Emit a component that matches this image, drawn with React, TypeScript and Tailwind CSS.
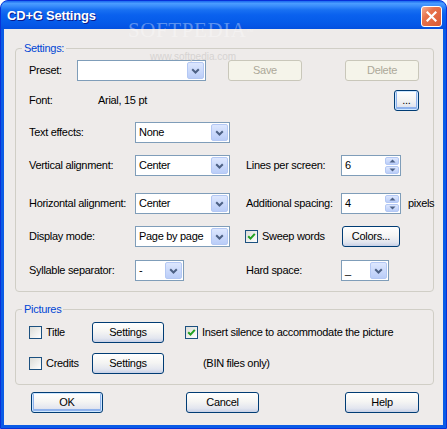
import React from 'react'

function Chevron() {
  return (
    <svg width="9" height="6" viewBox="0 0 9 6">
      <path d="M1.2 1.2 L4.5 4.5 L7.8 1.2" stroke="#4D6185" strokeWidth="2" fill="none" />
    </svg>
  )
}

function Combo({ value, w }: { value: string; w: string }) {
  return (
    <div className={`${w} h-[21px] shrink-0 flex border border-[#7F9DB9] bg-white`}>
      <div className="flex-1 pl-[3px] flex items-center overflow-hidden whitespace-nowrap">{value}</div>
      <div className="w-[17px] m-px flex items-center justify-center rounded-[2px] border border-[#B4C8F4] bg-[linear-gradient(180deg,#DDE7FE,#BACDF8)]">
        <Chevron />
      </div>
    </div>
  )
}

function SpinArrow({ up }: { up?: boolean }) {
  return (
    <svg width="7" height="4" viewBox="0 0 7 4">
      <path d={up ? 'M0.5 3.5 L3.5 0.5 L6.5 3.5 Z' : 'M0.5 0.5 L3.5 3.5 L6.5 0.5 Z'} fill="#4D6185" />
    </svg>
  )
}

function Spin({ value }: { value: string }) {
  return (
    <div className="w-[60px] h-[21px] shrink-0 flex border border-[#7F9DB9] bg-white">
      <div className="flex-1 pl-[3px] flex items-center">{value}</div>
      <div className="w-[16px] flex flex-col gap-px p-px">
        <div className="flex-1 flex items-center justify-center rounded-[2px] border border-[#B4C8F4] bg-[linear-gradient(180deg,#DDE7FE,#BACDF8)]">
          <SpinArrow up />
        </div>
        <div className="flex-1 flex items-center justify-center rounded-[2px] border border-[#B4C8F4] bg-[linear-gradient(180deg,#DDE7FE,#BACDF8)]">
          <SpinArrow />
        </div>
      </div>
    </div>
  )
}

function Check({ checked }: { checked?: boolean }) {
  return (
    <div className="w-[13px] h-[13px] shrink-0 border border-[#1C5180] bg-[linear-gradient(135deg,#DCDCD7,#FFFFFF)] flex items-center justify-center">
      {checked && (
        <svg width="9" height="9" viewBox="0 0 9 9">
          <path d="M1.2 4.2 L3.5 6.6 L7.8 1.8" stroke="#21A121" strokeWidth="2" fill="none" />
        </svg>
      )}
    </div>
  )
}

function Btn({ children, w, def, disabled, cls = '' }: { children: React.ReactNode; w: string; def?: boolean; disabled?: boolean; cls?: string }) {
  if (disabled) {
    return (
      <div className={`${w} ${cls} h-[21px] shrink-0 flex items-center justify-center rounded-[3px] border border-[#C9C7BA] bg-[#F5F4EA] text-[#ACA899]`}>
        {children}
      </div>
    )
  }
  return (
    <div
      className={`${w} ${cls} h-[21px] shrink-0 flex items-center justify-center rounded-[3px] border border-[#003C74] bg-[linear-gradient(180deg,#FFFFFF_0%,#F5F5F3_45%,#E3E6EF_80%,#C7D0E6_100%)] ${
        def ? 'shadow-[inset_0_0_0_1px_#CEE7FF,inset_0_-1px_0_2px_#8FB2EC]' : ''
      }`}
    >
      {children}
    </div>
  )
}

function Group({ label, children, cls = '' }: { label: string; children: React.ReactNode; cls?: string }) {
  return (
    <div className={`relative w-[419px] border border-[#D0CEC6] rounded-[4px] ${cls}`}>
      <span className="absolute left-[6px] top-[-8px] px-[2px] leading-[14px] bg-[#EEEBEA] text-[#0046D5]">{label}</span>
      {children}
    </div>
  )
}

const row = 'h-[21px] flex items-center whitespace-nowrap [&>*]:shrink-0'

export default function App() {
  return (
    <div className="w-[447px] h-[429px] flex flex-col rounded-t-[8px] overflow-hidden bg-[#0A5BE6] border border-[#0831D9] relative font-['Liberation_Sans',Arial,sans-serif] text-[11px] tracking-[-0.3px] text-black">
      <div className="h-[28px] shrink-0 flex items-center justify-between bg-[linear-gradient(180deg,#1A6AF0_0%,#4A9CFF_9%,#3A8DFB_18%,#1870F2_32%,#0A61EE_50%,#065CEA_72%,#0556E6_88%,#0350DE_100%)]">
        <span className="ml-[6px] mt-[1px] text-white font-bold text-[13px] tracking-[-0.2px] [text-shadow:1px_1px_0_#0A1A8A]">CD+G Settings</span>
        <div className="mr-[4px] mt-[2px] w-[21px] h-[21px] rounded-[3px] border border-white bg-[linear-gradient(135deg,#F4B095_0%,#E8734C_35%,#DA5A35_100%)] flex items-center justify-center">
          <svg width="11" height="11" viewBox="0 0 11 11">
            <path d="M1.5 1.5 L9.5 9.5 M9.5 1.5 L1.5 9.5" stroke="white" strokeWidth="2.2" strokeLinecap="square" />
          </svg>
        </div>
      </div>
      <div className="flex-1 flex px-[3px] pb-[3px]">
        <div className="flex-1 bg-[#EEEBEA] flex flex-col pl-[11px]">
          <Group label="Settings:" cls="mt-[19px]">
            <div className="pl-[13px] pr-[14px] pt-[11px] pb-[10px]">
              <div className={row}>
                <span className="w-[48px]">Preset:</span>
                <Combo value="" w="w-[129px]" />
                <Btn w="w-[74px]" disabled cls="ml-[22px]">Save</Btn>
                <Btn w="w-[74px]" disabled cls="ml-auto">Delete</Btn>
              </div>
              <div className={`${row} mt-[9px]`}>
                <span className="w-[69px]">Font:</span>
                <span>Arial, 15 pt</span>
                <Btn w="w-[25px]" def cls="ml-auto">...</Btn>
              </div>
              <div className={`${row} mt-[11px]`}>
                <span className="w-[106px]">Text effects:</span>
                <Combo value="None" w="w-[95px]" />
              </div>
              <div className={`${row} mt-[12px]`}>
                <span className="w-[106px]">Vertical alignment:</span>
                <Combo value="Center" w="w-[95px]" />
                <span className="ml-[16px] w-[95px]">Lines per screen:</span>
                <Spin value="6" />
              </div>
              <div className={`${row} mt-[17px]`}>
                <span className="w-[106px]">Horizontal alignment:</span>
                <Combo value="Center" w="w-[95px]" />
                <span className="ml-[16px] w-[95px]">Additional spacing:</span>
                <Spin value="4" />
                <span className="ml-[7px]">pixels</span>
              </div>
              <div className={`${row} mt-[12px]`}>
                <span className="w-[106px]">Display mode:</span>
                <Combo value="Page by page" w="w-[95px]" />
                <div className="ml-[15px] w-[97px] flex items-center">
                  <Check checked />
                  <span className="ml-[4px]">Sweep words</span>
                </div>
                <Btn w="w-[58px]">Colors...</Btn>
              </div>
              <div className={`${row} mt-[13px]`}>
                <span className="w-[106px]">Syllable separator:</span>
                <div className="w-[95px]">
                  <Combo value="-" w="w-[49px]" />
                </div>
                <span className="ml-[16px] w-[95px]">Hard space:</span>
                <Combo value="_" w="w-[48px]" />
              </div>
            </div>
          </Group>
          <Group label="Pictures" cls="mt-[17px]">
            <div className="pl-[13px] pt-[12px] pb-[10px] flex">
              <div className="flex flex-col gap-[10px]">
                <div className={row}>
                  <div className="w-[63px] flex items-center">
                    <Check />
                    <span className="ml-[4px]">Title</span>
                  </div>
                  <Btn w="w-[72px]">Settings</Btn>
                </div>
                <div className={row}>
                  <div className="w-[63px] flex items-center">
                    <Check />
                    <span className="ml-[4px]">Credits</span>
                  </div>
                  <Btn w="w-[72px]">Settings</Btn>
                </div>
              </div>
              <div className="ml-[21px] flex flex-col gap-[10px]">
                <div className={row}>
                  <Check checked />
                  <span className="ml-[4px]">Insert silence to accommodate the picture</span>
                </div>
                <div className={`${row} pl-[18px]`}>(BIN files only)</div>
              </div>
            </div>
          </Group>
          <div className="w-[419px] mt-[7px] flex items-center">
            <Btn w="w-[72px]" def cls="ml-[16px]">OK</Btn>
            <Btn w="w-[73px]" cls="ml-[83px]">Cancel</Btn>
            <Btn w="w-[74px]" cls="ml-[86px]">Help</Btn>
          </div>
        </div>
      </div>
      <span className="absolute left-[127px] top-[19px] font-['Liberation_Serif',serif] text-[21px] leading-[21px] tracking-[0.6px] text-white/35 pointer-events-none">
        SOFTPEDIA<sup className="text-[7px]">™</sup>
      </span>
      <span className="absolute left-[149px] top-[48px] text-[10px] tracking-[0px] text-[#D6D3D2] pointer-events-none">www.softpedia.com</span>
    </div>
  )
}
